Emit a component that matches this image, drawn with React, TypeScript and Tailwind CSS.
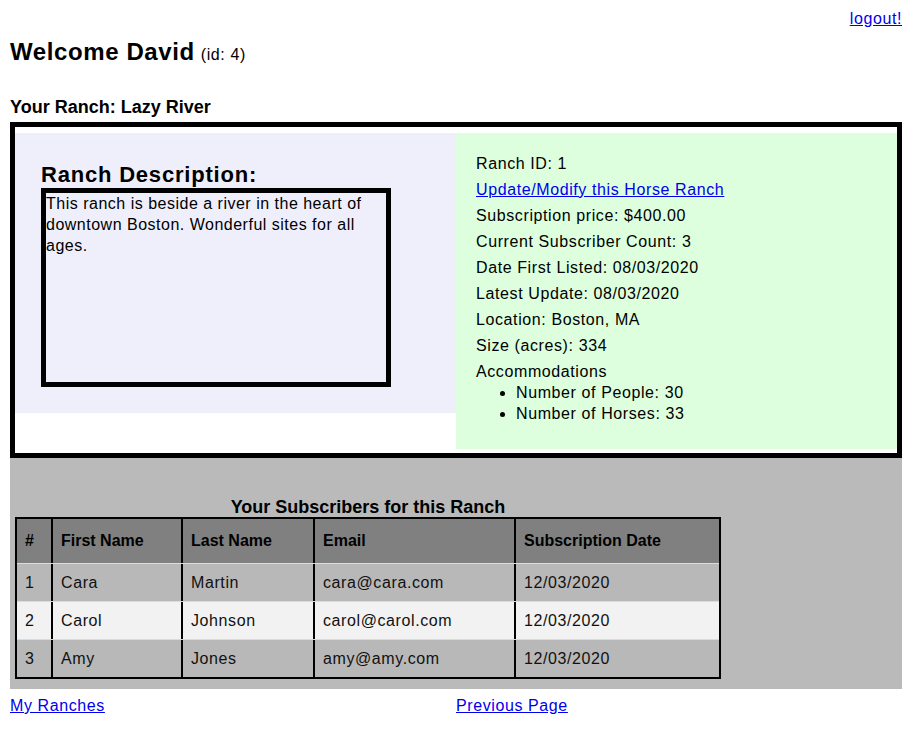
import React from "react";

const rows = [
  { n: "1", first: "Cara", last: "Martin", email: "cara@cara.com", date: "12/03/2020", bg: "bg-[#b8b8b8]" },
  { n: "2", first: "Carol", last: "Johnson", email: "carol@carol.com", date: "12/03/2020", bg: "bg-[#f2f2f2]" },
  { n: "3", first: "Amy", last: "Jones", email: "amy@amy.com", date: "12/03/2020", bg: "bg-[#b8b8b8]" },
];

const widths = ["w-[34px]", "w-[130px]", "w-[132px]", "w-[201px]", "w-[205px]"];

function Cell({ i, children, bold }: { i: number; children: React.ReactNode; bold?: boolean }) {
  return (
    <div
      className={`${widths[i]} shrink-0 ${i > 0 ? "border-l-2 border-black" : ""} h-full flex items-center pl-2 ${
        bold ? "font-bold" : "tracking-[0.6px] text-[#111]"
      }`}
    >
      {children}
    </div>
  );
}

export default function App() {
  return (
    <div className="min-h-[735px] bg-white text-black pl-[10px] pr-[14px] font-['Liberation_Sans',Arial,sans-serif] text-[16px]">
      <div className="h-[30px] flex justify-end items-start pt-[10px]">
        <a href="#" className="leading-[18px] text-[#0000ee] underline tracking-[0.6px]">
          logout!
        </a>
      </div>
      <h1 className="mt-[8px] h-[28px] flex items-baseline gap-[6px] text-[24px] leading-[28px] font-bold tracking-[0.6px]">
        <span>Welcome David</span>
        <span className="text-[16px] font-normal tracking-[0.6px]">(id: 4)</span>
      </h1>
      <h3 className="mt-[30px] mb-[4px] text-[18px] leading-[22px] font-bold">Your Ranch: Lazy River</h3>

      <div className="border-[5px] border-black flex items-start pt-[6px] pb-[4px]">
        <div className="w-1/2 h-[280px] bg-[#efeffc] pl-[26px] pt-[29px]">
          <h2 className="text-[22px] leading-[26px] font-bold tracking-[0.8px]">Ranch Description:</h2>
          <div className="w-[350px] h-[199px] border-[5px] border-black leading-[21px] tracking-[0.5px]">
            This ranch is beside a river in the heart of
            <br />
            downtown Boston. Wonderful sites for all
            <br />
            ages.
          </div>
        </div>
        <div className="w-1/2 h-[316px] bg-[#ddffdd] pl-[20px] pt-[18px] tracking-[0.6px]">
          <div className="leading-[26px]">Ranch ID: 1</div>
          <div className="leading-[26px]">
            <a href="#" className="text-[#0000ee] underline">
              Update/Modify this Horse Ranch
            </a>
          </div>
          <div className="leading-[26px]">Subscription price: $400.00</div>
          <div className="leading-[26px]">Current Subscriber Count: 3</div>
          <div className="leading-[26px]">Date First Listed: 08/03/2020</div>
          <div className="leading-[26px]">Latest Update: 08/03/2020</div>
          <div className="leading-[26px]">Location: Boston, MA</div>
          <div className="leading-[26px]">Size (acres): 334</div>
          <div className="leading-[21px] mt-[2px]">Accommodations</div>
          <ul className="list-disc pl-[40px] leading-[21px]">
            <li>Number of People: 30</li>
            <li>Number of Horses: 33</li>
          </ul>
        </div>
      </div>

      <div className="bg-[#bababa] pl-[5px] pt-[39px] pb-[10px]">
        <div className="w-[706px] text-center text-[18px] leading-[20px] font-bold">
          Your Subscribers for this Ranch
        </div>
        <div className="w-[706px] border-2 border-black">
          <div className="flex h-[44px] bg-[#808080]">
            <Cell i={0} bold>#</Cell>
            <Cell i={1} bold>First Name</Cell>
            <Cell i={2} bold>Last Name</Cell>
            <Cell i={3} bold>Email</Cell>
            <Cell i={4} bold>Subscription Date</Cell>
          </div>
          {rows.map((r) => (
            <div key={r.n} className={`flex h-[38px] border-t border-[#dcdcdc] ${r.bg}`}>
              <Cell i={0}>{r.n}</Cell>
              <Cell i={1}>{r.first}</Cell>
              <Cell i={2}>{r.last}</Cell>
              <Cell i={3}>{r.email}</Cell>
              <Cell i={4}>{r.date}</Cell>
            </div>
          ))}
        </div>
      </div>

      <div className="flex pt-[8px] leading-[18px] tracking-[0.6px]">
        <div className="w-[446px]">
          <a href="#" className="text-[#0000ee] underline">
            My Ranches
          </a>
        </div>
        <div>
          <a href="#" className="text-[#0000ee] underline">
            Previous Page
          </a>
        </div>
      </div>
    </div>
  );
}
